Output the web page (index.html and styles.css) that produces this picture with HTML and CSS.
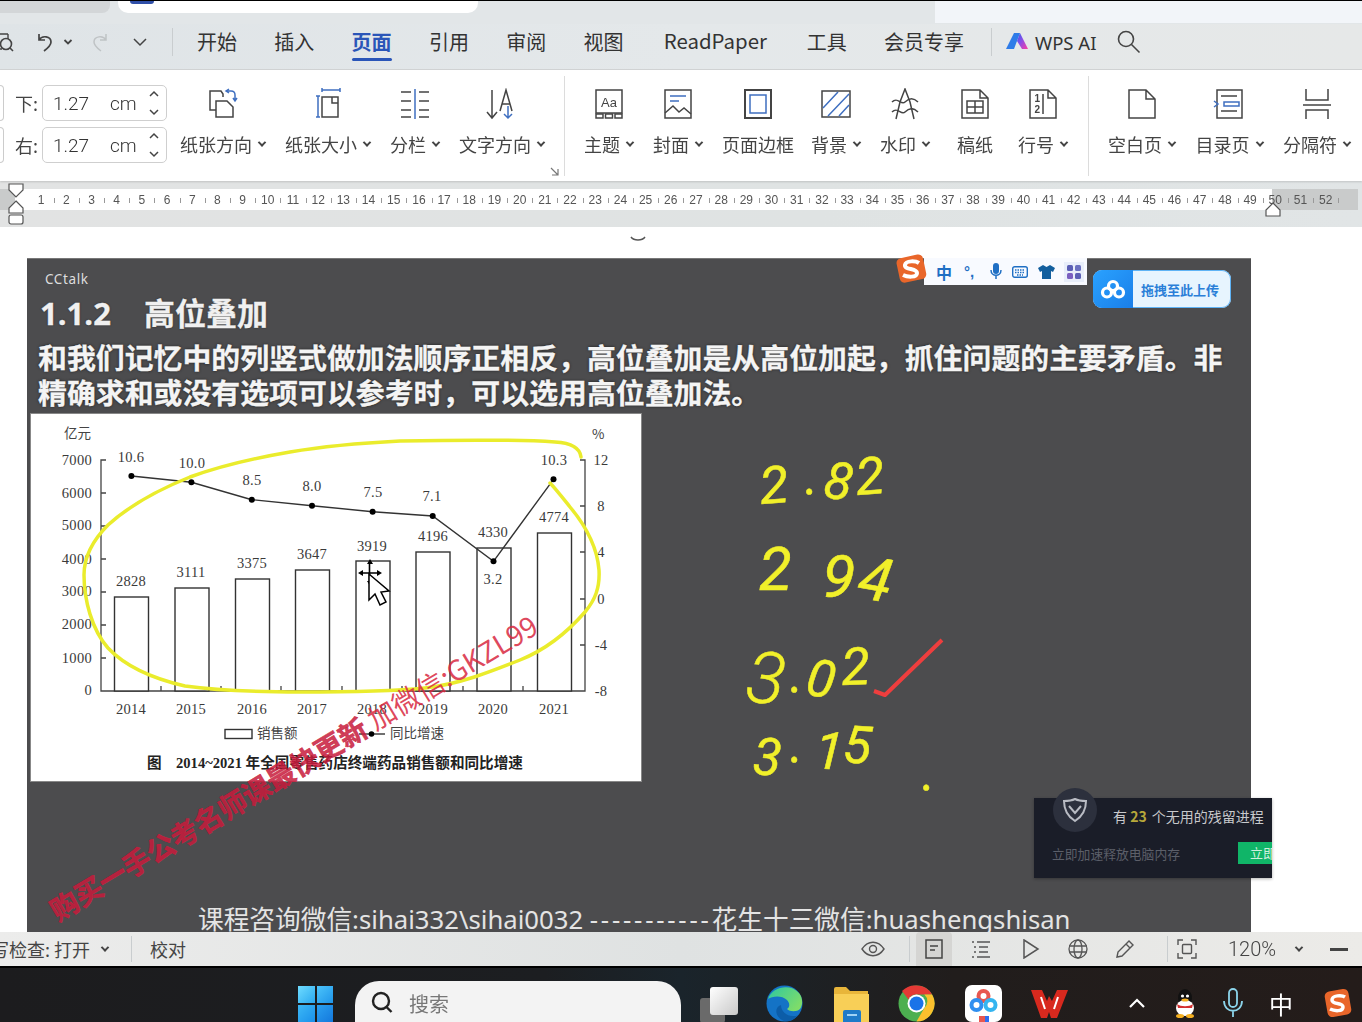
FILE: index.html
```html
<!DOCTYPE html>
<html lang="zh-CN">
<head>
<meta charset="utf-8">
<title>WPS 页面</title>
<link rel="stylesheet" href="styles.css">
</head>
<body>
<div class="screen">

  <div class="tabstrip">
    <div class="tab-prev"></div>
    <div class="tab-active"><span class="tab-blob"></span></div>
    <div class="tab-right"></div>
  </div>

  <nav class="menubar">
    <div class="quick">
      <svg class="q-preview" width="16" height="24" viewBox="0 0 16 24"><path d="M-4 4h12M8 4v5M-4 19h6" fill="none" stroke="#444" stroke-width="1.4"/><circle cx="6" cy="14" r="5.5" fill="none" stroke="#444" stroke-width="1.6"/><path d="M10 18l3 3" stroke="#444" stroke-width="1.6"/></svg>
      <svg class="q-undo" width="18" height="22" viewBox="0 0 18 22"><path d="M3 3v6h6M3 9c3-5 12-4 12 2 0 3-3 6-7 9" fill="none" stroke="#444" stroke-width="1.7"/></svg>
      <svg class="q-caret" width="10" height="8" viewBox="0 0 10 8"><path d="M1.5 2l3.5 3.500L8.500 2" fill="none" stroke="#444" stroke-width="1.800"/></svg>
      <svg class="q-redo" width="18" height="22" viewBox="0 0 18 22"><path d="M15 3v6H9M15 9c-3-5-12-4-12 2 0 3 3 6 7 9" fill="none" stroke="#bfc3c5" stroke-width="1.500"/></svg>
      <svg class="q-more" width="16" height="10" viewBox="0 0 16 10"><path d="M2 2l6 6 6-6" fill="none" stroke="#444" stroke-width="1.500"/></svg>
    </div>
    <span class="vsep"></span>
    <div class="menu-items">
      <span class="menu-item">开始</span>
      <span class="menu-item">插入</span>
      <span class="menu-item is-active">页面</span>
      <span class="menu-item">引用</span>
      <span class="menu-item">审阅</span>
      <span class="menu-item">视图</span>
      <span class="menu-item menu-latin">ReadPaper</span>
      <span class="menu-item">工具</span>
      <span class="menu-item">会员专享</span>
    </div>
    <span class="vsep vsep-ai"></span>
    <svg class="ai-logo" width="24" height="20" viewBox="0 0 24 20"><defs><linearGradient id="aig" x1="0" x2="1" y1="0" y2="1"><stop offset="0" stop-color="#3a5ce8"/><stop offset=".45" stop-color="#8a4ee8"/><stop offset="1" stop-color="#ff3fa0"/></linearGradient></defs><path d="M9 1h6L9 17H1z" fill="#2f7ce8"/><path d="M12 9l3-8 8 16h-6z" fill="url(#aig)"/></svg>
    <span class="ai-text">WPS AI</span>
    <svg class="menu-search" width="26" height="26" viewBox="0 0 26 26"><circle cx="10" cy="10" r="7.500" fill="none" stroke="#444" stroke-width="1.600"/><path d="M15.500 15.500l8 8" stroke="#444" stroke-width="1.600"/></svg>
  </nav>

  <section class="ribbon">
    <div class="margins">
      <div class="margin-row">
        <span class="stub"></span><span class="margin-label">下:</span>
        <div class="spin"><span class="spin-val">1.27</span><span class="spin-unit">cm</span>
          <svg class="spin-arrows" width="12" height="28" viewBox="0 0 12 28"><path d="M2 7l4-4 4 4M2 21l4 4 4-4" fill="none" stroke="#444" stroke-width="1.500"/></svg></div>
      </div>
      <div class="margin-row">
        <span class="stub"></span><span class="margin-label">右:</span>
        <div class="spin"><span class="spin-val">1.27</span><span class="spin-unit">cm</span>
          <svg class="spin-arrows" width="12" height="28" viewBox="0 0 12 28"><path d="M2 7l4-4 4 4M2 21l4 4 4-4" fill="none" stroke="#444" stroke-width="1.500"/></svg></div>
      </div>
    </div>

    <div class="group group-a">
      <div class="tool"><svg class="ico" viewBox="0 0 32 32"><path d="M9 22H3V3h11l2 3v3M9 29V13h11l6 6v10z" class="k"/><path d="M20 3h4c3 0 4 2 4 4v5M26 10l2 3 2-3M22 1l-3 2 3 2" class="b"/></svg><span class="tool-label">纸张方向<i class="dd"></i></span></div>
      <div class="tool"><svg class="ico" viewBox="0 0 32 32"><path d="M10 9h16v20H10zM20 9v6h6" class="k"/><path d="M10 2h18M10 0v4M28 0v4M6 8v21M4 8h4M4 29h4" class="b"/></svg><span class="tool-label">纸张大小<i class="dd"></i></span></div>
      <div class="tool"><svg class="ico" viewBox="0 0 32 32"><path d="M2 4h10M2 13h10M2 22h10M2 29h10M20 4h10M20 13h10M20 22h10M20 29h10" class="k"/><path d="M16 1v30" class="b"/></svg><span class="tool-label">分栏<i class="dd"></i></span></div>
      <div class="tool"><svg class="ico" viewBox="0 0 32 32"><path d="M6 2v28M1 24l5 6 5-6M14 23l6-21 6 21M16 16h8" class="k"/><path d="M22 18v12M18 26l4 4 4-4" class="b"/></svg><span class="tool-label">文字方向<i class="dd"></i></span></div>
    </div>
    <div class="launcher-wrap"><svg class="launcher" width="9" height="9" viewBox="0 0 9 9"><path d="M1 1l6.500 6.500M8 2v6H2" fill="none" stroke="#777" stroke-width="1.200"/></svg></div>
    <span class="rsep"></span>

    <div class="group group-b">
      <div class="tool"><svg class="ico" viewBox="0 0 32 32"><path d="M3 2h26v23H3z" class="k"/><path d="M3 26h7v4H3zM12.500 26h7v4h-7zM22 26h7v4h-7z" class="k"/><text x="16" y="19" class="ico-text">Aa</text></svg><span class="tool-label">主题<i class="dd"></i></span></div>
      <div class="tool"><svg class="ico" viewBox="0 0 32 32"><path d="M3 2h26v28H3z" class="k"/><path d="M8 8h16M8 13h9" class="b"/><path d="M3 25l8-7 6 6 5-4 7 6" class="k"/></svg><span class="tool-label">封面<i class="dd"></i></span></div>
      <div class="tool tool-tight"><svg class="ico" viewBox="0 0 32 32"><path d="M3 2h26v28H3z" class="k k2"/><path d="M8 7h16v18H8z" class="b"/></svg><span class="tool-label">页面边框</span></div>
      <div class="tool"><svg class="ico" viewBox="0 0 32 32"><path d="M2 3h28v26H2z" class="k"/><path d="M3 20L18 4M8 28L29 6M19 28l10-11" class="b"/></svg><span class="tool-label">背景<i class="dd"></i></span></div>
      <div class="tool"><svg class="ico" viewBox="0 0 32 32"><path d="M7 31l4-17 5-13 5 13 4 17" class="k"/><path d="M3 14c6-6 9 4 13 0s8-5 13 0M3 24c6-6 9 4 13 0s8-5 13 0" class="k"/></svg><span class="tool-label">水印<i class="dd"></i></span></div>
      <div class="tool tool-gaoz"><svg class="ico" viewBox="0 0 32 32"><path d="M3 2h18l8 8v20H3zM21 2v8h8" class="k"/><path d="M8 13h16v12H8zM16 13v12M8 19h16" class="k"/></svg><span class="tool-label">稿纸</span></div>
      <div class="tool tool-hang"><svg class="ico" viewBox="0 0 32 32"><path d="M3 2h18l8 8v20H3zM21 2v8h8M16 6v20" class="k"/><text x="7.500" y="14" class="ico-num">1</text><text x="7.500" y="25" class="ico-num">2</text></svg><span class="tool-label">行号<i class="dd"></i></span></div>
    </div>
    <span class="rsep rsep2"></span>
    <div class="group group-c">
      <div class="tool"><svg class="ico" viewBox="0 0 32 32"><path d="M3 2h17l9 9v19H3zM20 2v9h9" class="k"/></svg><span class="tool-label">空白页<i class="dd"></i></span></div>
      <div class="tool"><svg class="ico" viewBox="0 0 32 32"><path d="M4 2h25v28H4zM8 8h16M8 23h16" class="k"/><path d="M11 14h15v4H11zM1 13l4 3-4 3" class="b"/></svg><span class="tool-label">目录页<i class="dd"></i></span></div>
      <div class="tool"><svg class="ico" viewBox="0 0 32 32"><path d="M5 1v11h22V1M2 17h28M5 31V22h22v9" class="k"/></svg><span class="tool-label">分隔符<i class="dd"></i></span></div>
    </div>
  </section>

  <div class="rulerband">
    <div class="ruler">
      <span>1</span><span>2</span><span>3</span><span>4</span><span>5</span><span>6</span><span>7</span><span>8</span><span>9</span><span>10</span><span>11</span><span>12</span><span>13</span>
      <span>14</span><span>15</span><span>16</span><span>17</span><span>18</span><span>19</span><span>20</span><span>21</span><span>22</span><span>23</span><span>24</span><span>25</span><span>26</span>
      <span>27</span><span>28</span><span>29</span><span>30</span><span>31</span><span>32</span><span>33</span><span>34</span><span>35</span><span>36</span><span>37</span><span>38</span><span>39</span>
      <span>40</span><span>41</span><span>42</span><span>43</span><span>44</span><span>45</span><span>46</span><span>47</span><span>48</span><span>49</span><span>50</span><span>51</span><span>52</span>
    </div>
    <svg class="indent-left" width="18" height="44" viewBox="0 0 18 44"><path d="M2 2h14v6l-7 7-7-7z" fill="#fff" stroke="#555" stroke-width="1.200"/><path d="M9 19l7 7v5H2v-5z" fill="#fff" stroke="#555" stroke-width="1.200"/><rect x="2" y="33" width="14" height="9" rx="2" fill="#fff" stroke="#555" stroke-width="1.200"/></svg>
    <svg class="indent-right" width="18" height="18" viewBox="0 0 18 18"><path d="M9 2l7 7v6H2V9z" fill="#fff" stroke="#555" stroke-width="1.200"/></svg>
  </div>

  <main class="doc">
    <svg class="spinner" width="16" height="6" viewBox="0 0 16 6"><path d="M1 1c3 4 11 4 14 0" fill="none" stroke="#555" stroke-width="1.500"/></svg>
    <div class="slide">
      <div class="brand">CCtalk</div>
      <h1 class="slide-title"><span class="slide-no">1.1.2</span>高位叠加</h1>
      <p class="slide-body">和我们记忆中的列竖式做加法顺序正相反，高位叠加是从高位加起，抓住问题的主要矛盾。非<br>精确求和或没有选项可以参考时，可以选用高位叠加法。</p>

      <div class="chart-card">
        <svg class="chart" viewBox="31 414 610 366" width="610" height="366">
          <g class="axis">
            <path d="M106 460h-5v231h484V460h-5"/>
            <path d="M101 493h5M101 526h5M101 559h5M101 592h5M101 625h5M101 658h5M585 506h-5M585 552h-5M585 599h-5M585 645h-5"/>
            <path d="M161 691v-5M221 691v-5M281 691v-5M342 691v-5M402 691v-5M463 691v-5M523 691v-5"/>
          </g>
          <g class="bars">
            <rect x="114.500" y="597" width="34" height="94"/>
            <rect x="175" y="588" width="34" height="103"/>
            <rect x="235.500" y="579" width="34" height="112"/>
            <rect x="295.500" y="570" width="34" height="121"/>
            <rect x="356" y="561" width="34" height="130"/>
            <rect x="416" y="552" width="34" height="139"/>
            <rect x="477" y="548" width="34" height="143"/>
            <rect x="537.500" y="533" width="34" height="158"/>
          </g>
          <path class="trend" d="M131.400 476L191.400 482.300 251.800 499.700 312 505.700 372.600 511.700 432.700 516 493.500 561.300 553.500 479.300"/>
          <g class="dots">
            <circle cx="131.400" cy="476" r="3"/><circle cx="191.400" cy="482.300" r="3"/><circle cx="251.800" cy="499.700" r="3"/><circle cx="312" cy="505.700" r="3"/><circle cx="372.600" cy="511.700" r="3"/><circle cx="432.700" cy="516" r="3"/><circle cx="493.500" cy="561.300" r="3"/><circle cx="553.500" cy="479.300" r="3"/>
          </g>
          <g class="ct ct-end">
            <text x="92" y="465">7000</text><text x="92" y="498">6000</text><text x="92" y="530">5000</text><text x="92" y="564">4000</text><text x="92" y="596">3000</text><text x="92" y="629">2000</text><text x="92" y="663">1000</text><text x="92" y="695">0</text>
          </g>
          <g class="ct ct-mid">
            <text x="601" y="465">12</text><text x="601" y="511">8</text><text x="601" y="557">4</text><text x="601" y="604">0</text><text x="601" y="650">-4</text><text x="601" y="696">-8</text>
            <text x="131" y="462">10.6</text><text x="192" y="468">10.0</text><text x="252" y="485">8.5</text><text x="312" y="491">8.0</text><text x="373" y="497">7.5</text><text x="432" y="501">7.1</text><text x="493" y="584">3.2</text><text x="554" y="465">10.3</text>
            <text x="131" y="586">2828</text><text x="191" y="577">3111</text><text x="252" y="568">3375</text><text x="312" y="559">3647</text><text x="372" y="551">3919</text><text x="433" y="541">4196</text><text x="493" y="537">4330</text><text x="554" y="522">4774</text>
            <text x="131" y="714">2014</text><text x="191" y="714">2015</text><text x="252" y="714">2016</text><text x="312" y="714">2017</text><text x="372" y="714">2018</text><text x="433" y="714">2019</text><text x="493" y="714">2020</text><text x="554" y="714">2021</text>
          </g>
          <text class="cj" x="64" y="438">亿元</text>
          <text class="cj" x="592" y="439">%</text>
          <rect class="legend-box" x="225" y="729.500" width="27" height="9"/>
          <text class="cj" x="257" y="738">销售额</text>
          <path class="trend" d="M359 734h26"/><circle cx="371.500" cy="734" r="2.800"/>
          <text class="cj" x="390" y="738">同比增速</text>
          <text class="caption" x="147" y="768">图<tspan x="176">2014~2021 年全国零售药店终端药品销售额和同比增速</tspan></text>
        </svg>
      </div>

      <p class="slide-foot">课程咨询微信:sihai332\sihai0032 <span class="foot-dash">-----------</span>花生十三微信:huashengshisan</p>

      <svg class="ink" viewBox="27 258 1224 674" width="1224" height="674">
        <path class="ink-y" d="M581 457C580 448 572 443 555 442C510 439 450 440 400 441C360 443 325 446 290 452C255 458 220 466 190 477C160 489 130 505 108 525C92 541 84 558 84 575C84 600 92 630 108 648C125 666 150 678 185 686C220 691 260 692 300 692C340 692 385 692 425 688C460 684 490 672 520 660C545 650 565 635 585 612C595 600 600 588 599 570C597 545 585 525 570 507C562 497 555 488 550 483"/>
        <g class="ink-text">
          <text x="761 805 822 857" y="504 494 497 495" rotate="-4 0 8 -4">2.82</text>
          <text class="ink-big" x="759 818 820 856" y="590 570 596 597" rotate="0 0 6 10">2 94</text>
          <text x="744 790 804 842" y="701 692 694 685" rotate="6 0 10 -2"><tspan class="ink-tall">3</tspan>.02</text>
          <text x="752 790 814 842" y="774 762 768 762" rotate="4 0 4 4">3.15</text>
          <text x="922" y="790">.</text>
        </g>
        <path class="ink-r" d="M874 691l11 4 57-55"/>
        <text class="wm" transform="translate(58 922) rotate(-31)"><tspan class="wm-bold">购买一手公考名师课最快更新</tspan> <tspan class="wm-light">加微信:GKZL99</tspan></text>
        <g class="cursor">
          <path d="M369.500 573v-10m0 20v-10m-9 0h18" stroke="#000" stroke-width="1.600" fill="none"/>
          <path d="M370 559l-3 5h6zM370 586l-3-5h6zM358 573l5-3v6zM382 573l-5-3v6z" fill="#000"/>
          <path d="M369 574v26l6-6 5 11 6-3-5-10 8-1z" fill="#fff" stroke="#000" stroke-width="1.500"/>
        </g>
      </svg>

      <div class="ime">
        <svg class="ime-logo" width="34" height="34" viewBox="0 0 34 34"><rect x="3" y="4" width="27" height="25" rx="5" transform="rotate(-12 17 17)" fill="#e9662a"/><path d="M24 11c-3-2-13-3-14 2s12 3 12 8-10 4-14 2" fill="none" stroke="#fff" stroke-width="4"/></svg>
        <span class="ime-zh">中</span>
        <span class="ime-punct">°,</span>
        <svg width="12" height="17" viewBox="0 0 12 17"><rect x="3" y="0" width="6" height="11" rx="3" fill="#1f6fc4"/><path d="M1 7c0 7 10 7 10 0M6 12v4" fill="none" stroke="#1f6fc4" stroke-width="1.500"/></svg>
        <svg width="16" height="12" viewBox="0 0 16 12"><rect x=".7" y=".7" width="14.600" height="10.600" rx="2" fill="none" stroke="#1f6fc4" stroke-width="1.400"/><path d="M3 4h10M3 6.500h10M5 9h6" stroke="#1f6fc4" stroke-width="1.300" stroke-dasharray="1.500 1"/></svg>
        <svg width="17" height="14" viewBox="0 0 17 14"><path d="M5 0l3.500 2L12 0l5 3-2 4-2-1v8H4V6L2 7 0 3z" fill="#135f9e"/></svg>
        <svg class="ime-apps" width="20" height="20" viewBox="0 0 20 20"><rect width="20" height="20" fill="#e8eefa"/><rect x="3" y="3" width="6" height="6" rx="1.500" fill="#5b5fb5"/><rect x="11" y="3" width="6" height="6" rx="1.500" fill="#6a70c0"/><rect x="3" y="11" width="6" height="6" rx="1.500" fill="#7a5fc0"/><rect x="11" y="11" width="6" height="6" rx="1.500" fill="#5b5fb5"/></svg>
      </div>

      <div class="upload">
        <span class="upload-ico"><svg width="26" height="20" viewBox="0 0 26 20"><g fill="none" stroke="#fff" stroke-width="3.200"><circle cx="13" cy="7" r="4.500"/><circle cx="7" cy="13.500" r="4.500"/><circle cx="19" cy="13.500" r="4.500"/></g></svg></span>
        <span class="upload-text">拖拽至此上传</span>
      </div>

      <div class="toast">
        <span class="toast-badge"><svg width="28" height="28" viewBox="0 0 28 28"><path d="M14 3c4 2 7 2 11 2 0 9-3 15-11 20C6 20 3 14 3 5c4 0 7 0 11-2z" fill="none" stroke="#b9bcc4" stroke-width="2"/><path d="M8 10l6 7 6-7" fill="none" stroke="#b9bcc4" stroke-width="2"/></svg></span>
        <div class="toast-top">有 <b>23</b> 个无用的残留进程</div>
        <div class="toast-bottom"><span class="toast-sub">立即加速释放电脑内存</span><span class="toast-btn">立即清理</span></div>
      </div>
    </div>
  </main>

  <footer class="status">
    <span class="status-clip">写检查: 打开</span>
    <i class="dd status-dd"></i>
    <span class="vsep status-sep"></span>
    <span class="status-text">校对</span>
    <div class="status-right">
      <svg width="24" height="16" viewBox="0 0 24 16"><path d="M1 8c6-9 16-9 22 0-6 9-16 9-22 0z" fill="none" stroke="#555" stroke-width="1.400"/><circle cx="12" cy="8" r="3.500" fill="none" stroke="#555" stroke-width="1.400"/></svg>
      <span class="vsep sr-sep1"></span>
      <span class="view-active"><svg width="18" height="20" viewBox="0 0 18 20"><path d="M1 1h16v18H1z" fill="none" stroke="#444" stroke-width="1.500"/><path d="M5 7h8M5 11h5" stroke="#444" stroke-width="1.500"/></svg></span>
      <svg class="sr-list" width="20" height="18" viewBox="0 0 20 18"><path d="M6 2h13M8 7h9M8 12h9M6 17h13M1 2h2M3 7h2M3 12h2M1 17h2" stroke="#555" stroke-width="1.400"/></svg>
      <svg class="sr-play" width="18" height="20" viewBox="0 0 18 20"><path d="M2 1l14 9-14 9z" fill="none" stroke="#555" stroke-width="1.500"/></svg>
      <svg class="sr-globe" width="20" height="20" viewBox="0 0 20 20"><g fill="none" stroke="#555" stroke-width="1.300"><circle cx="10" cy="10" r="9"/><ellipse cx="10" cy="10" rx="4" ry="9"/><path d="M1 7h18M1 13h18"/></g></svg>
      <svg class="sr-pen" width="20" height="20" viewBox="0 0 20 20"><path d="M2 18l1-5L14 2l4 4L7 17zM11 5l4 4" fill="none" stroke="#555" stroke-width="1.400"/></svg>
      <span class="vsep sr-sep2"></span>
      <svg class="sr-full" width="20" height="20" viewBox="0 0 20 20"><path d="M1 6V1h5M14 1h5v5M19 14v5h-5M6 19H1v-5" fill="none" stroke="#555" stroke-width="1.400"/><rect x="5.500" y="5.500" width="9" height="9" rx="1" fill="none" stroke="#555" stroke-width="1.400"/></svg>
      <span class="zoom-val">120%</span>
      <i class="dd zoom-dd"></i>
      <span class="zoom-minus"></span>
    </div>
  </footer>

  <div class="taskbar">
    <span class="win"><i></i><i></i><i></i><i></i></span>
    <div class="search">
      <svg width="26" height="26" viewBox="0 0 26 26"><circle cx="11" cy="11" r="8" fill="none" stroke="#222" stroke-width="2.400"/><path d="M16.500 17l5 5" stroke="#222" stroke-width="2.400"/></svg>
      <span>搜索</span>
    </div>
    <span class="taskview"><i class="tv-back"></i><i class="tv-front"></i></span>
    <svg class="t-edge" width="37" height="37" viewBox="0 0 37 37"><defs><linearGradient id="eg" x1="0" x2="1" y1="0" y2=".6"><stop offset="0" stop-color="#2ec8a0"/><stop offset="1" stop-color="#7edc6a"/></linearGradient></defs><circle cx="18.500" cy="18.500" r="18" fill="#1473c6"/><path d="M2 14C6 2 24-2 33 8c4 5 4 12 1 16-3 3-10 3-13 0 3-2 3-6 0-9-5-5-15-4-19-1z" fill="url(#eg)"/><path d="M15 20c0 6 5 11 12 11 2 0 4 0 5-1-3 5-9 7-14 6-8-3-11-13-3-16z" fill="#0c5da8"/></svg>
    <svg class="t-folder" width="37" height="37" viewBox="0 0 37 37"><path d="M1 4a2 2 0 0 1 2-2h10l4 4h18a2 2 0 0 1 0 0v31H1z" fill="#e8b53a"/><path d="M1 9h35v28H1z" fill="#f8cf57"/><path d="M12 25h14a2 2 0 0 1 2 2v10H10V27a2 2 0 0 1 2-2z" fill="#1e7ac8"/><path d="M14 30h10" stroke="#9fd2f5" stroke-width="2"/></svg>
    <svg class="t-chrome" width="37" height="37" viewBox="0 0 37 37"><circle cx="18.500" cy="18.500" r="18" fill="#4caf50"/><path d="M18.500.5a18 18 0 0 1 15.600 9H18.500a9 9 0 0 0-8 5L4 6A18 18 0 0 1 18.500.5z" fill="#e53935"/><path d="M34.100 9.500A18 18 0 0 1 18.500 36.500l7.800-13.500a9 9 0 0 0 0-13.500z" fill="#fbc02d"/><circle cx="18.500" cy="18.500" r="9" fill="#fff"/><circle cx="18.500" cy="18.500" r="7" fill="#1a73e8"/></svg>
    <svg class="t-baidu" width="37" height="37" viewBox="0 0 37 37"><rect width="37" height="37" y="0" rx="7" fill="#fff"/><g fill="none" stroke-width="4"><circle cx="18.500" cy="11" r="5" stroke="#e8574f"/><circle cx="11.500" cy="20" r="5" stroke="#2f8ff0"/><circle cx="25.500" cy="20" r="5" stroke="#35b5f0"/></g><rect x="14" y="31" width="6" height="6" fill="#e8574f"/><rect x="20" y="31" width="4" height="6" fill="#2f6ff0"/></svg>
    <svg class="t-wps" width="37" height="30" viewBox="0 0 37 30"><path d="M0 1h11l5 11 2-5 3 5 5-11h11L26 29h-6l-2-6-2 6h-6z" fill="#d8291e"/><path d="M10 8l4 12M27 8l-4 12" stroke="#fff" stroke-width="2" fill="none"/></svg>
    <svg class="t-caret" width="18" height="12" viewBox="0 0 18 12"><path d="M2 10l7-7 7 7" fill="none" stroke="#fff" stroke-width="2.200"/></svg>
    <svg class="t-qq" width="22" height="30" viewBox="0 0 22 30"><ellipse cx="11" cy="10" rx="7" ry="9" fill="#111"/><ellipse cx="11" cy="20" rx="9" ry="8" fill="#fff"/><path d="M3 16c4 3 12 3 16 0l-1 4H4z" fill="#d32f2f"/><circle cx="8.500" cy="8" r="1.600" fill="#fff"/><circle cx="13.500" cy="8" r="1.600" fill="#fff"/><ellipse cx="11" cy="12" rx="3.500" ry="1.500" fill="#f5b021"/><ellipse cx="6" cy="28" rx="4" ry="2" fill="#f5b021"/><ellipse cx="16" cy="28" rx="4" ry="2" fill="#f5b021"/></svg>
    <svg class="t-mic" width="20" height="30" viewBox="0 0 20 30"><rect x="6" y="1" width="8" height="18" rx="4" fill="none" stroke="#8cd4ea" stroke-width="1.800"/><path d="M1 13c0 13 18 13 18 0M10 23v6" fill="none" stroke="#8cd4ea" stroke-width="1.800"/></svg>
    <span class="t-zh">中</span>
    <svg class="t-s" width="28" height="30" viewBox="0 0 28 30"><rect x="2" y="2" width="24" height="26" rx="5" transform="rotate(-10 14 15)" fill="#e9662a"/><path d="M21 9c-3-2-13-2-13 3s11 2 11 7-9 4-13 2" fill="none" stroke="#fff" stroke-width="3.500"/></svg>
  </div>
</div>
</body>
</html>
```
FILE: styles.css
```css
* { box-sizing: border-box; }
html, body { margin: 0; padding: 0; background: #fff; }
body { width: 1362px; height: 1022px; overflow: hidden; font-family: "Noto Sans CJK SC", "Noto Sans", sans-serif; color: #333; }
svg { display: block; flex: none; }
i { font-style: normal; display: block; }

.screen { width: 1362px; height: 1022px; display: flex; flex-direction: column; overflow: hidden; filter: blur(.3px); }

/* tab strip */
.tabstrip { height: 24px; flex: none; display: flex; align-items: flex-start; border-top: 1px solid #000; background: #e2e6e8; }
.tab-prev { width: 110px; height: 12px; background: #d3d6d8; border-radius: 0 0 8px 0; }
.tab-active { width: 360px; height: 12px; margin-left: 8px; background: #fff; border-radius: 0 0 10px 10px; padding-left: 12px; }
.tab-blob { display: block; width: 24px; height: 3px; background: #2f4fa8; border-radius: 0 0 3px 3px; }
.tab-right { width: 427px; height: 22px; margin-left: auto; background: #f2f5f9; }

/* menu */
.menubar { height: 46px; flex: none; display: flex; align-items: center; background: linear-gradient(90deg, #dfe4e7, #e4e8ea 50%, #e6e8e8); box-shadow: inset 0 -1px 0 #d2d4d5; padding-bottom: 10px; }
.quick { width: 172px; display: flex; align-items: center; flex: none; }
.q-undo { margin-left: 20px; }
.q-caret { margin-left: 9px; }
.q-redo { margin-left: 18px; }
.q-more { margin-left: 23px; }
.vsep { width: 1px; height: 28px; background: #c9cdcf; flex: none; display: block; }
.menu-items { display: flex; gap: 37.300px; margin-left: 24px; font-size: 20px; line-height: 28px; }
.menu-item { position: relative; color: #333; white-space: nowrap; }
.menu-latin { margin: -2px 2.500px 0 3px; font-size: 20.400px; }
.menu-item.is-active { color: #2a55b8; font-weight: 700; }
.menu-item.is-active::after { content: ""; position: absolute; left: 0; right: 0; bottom: -5px; height: 3px; background: #2a55b8; border-radius: 2px; }
.vsep-ai { margin-left: 27px; }
.ai-logo { margin-left: 13px; }
.ai-text { margin-left: 6px; font-size: 18.500px; color: #333; font-family: "Noto Sans", sans-serif; white-space: nowrap; }
.menu-search { margin-left: 20px; }

/* ribbon */
.ribbon { height: 111px; flex: none; display: flex; background: #fff; box-shadow: 0 1px 2px rgba(0,0,0,.15); position: relative; z-index: 1; }
.margins { width: 167px; flex: none; padding-top: 15px; display: flex; flex-direction: column; gap: 6px; }
.margin-row { display: flex; align-items: center; height: 36px; }
.stub { width: 4px; height: 36px; border: 1px solid #ccc; border-left: 0; border-radius: 0 4px 4px 0; }
.margin-label { margin-left: 11px; width: 27px; font-size: 18px; color: #444; }
.spin { width: 125px; height: 36px; border: 1px solid #cfcfcf; border-radius: 5px; display: flex; align-items: center; padding-left: 10px; font-family: "Roboto", sans-serif; font-weight: 300; font-size: 19px; color: #333; }
.spin-val { width: 57px; }
.spin-unit { width: 38px; }

.group { display: flex; gap: 20px; margin-left: 13px; }
.tool { display: flex; flex-direction: column; align-items: center; padding-top: 18px; }
.ico { width: 32px; height: 32px; }
.k { fill: none; stroke: #444; stroke-width: 1.500; }
.k2 { stroke-width: 2; }
.b { fill: none; stroke: #3f6fc0; stroke-width: 1.500; }
.ico-text { font: 13px "Liberation Sans", sans-serif; text-anchor: middle; fill: #444; }
.ico-num { font: bold 10px "Liberation Sans", sans-serif; fill: #444; }
.tool-label { margin-top: 10px; display: flex; align-items: center; font-size: 18px; line-height: 28px; color: #444; white-space: nowrap; }
.dd { width: 6px; height: 6px; margin-left: 7px; border-right: 2px solid #444; border-bottom: 2px solid #444; transform: rotate(45deg) translate(-1px,-1px); flex: none; }
.launcher-wrap { width: 20px; flex: none; position: relative; }
.launcher { position: absolute; right: 5px; bottom: 5px; }
.rsep { width: 1px; height: 100px; margin-top: 6px; background: #dcdcdc; flex: none; display: block; }
.group-b { margin-left: 19px; }
.tool-tight { margin-right: -3px; }
.tool-gaoz { margin-left: 8px; }
.tool-hang { margin-left: 5px; }
.rsep2 { margin-left: 21px; }
.group-c { margin-left: 19px; gap: 20.500px; }

/* ruler */
.rulerband { height: 46px; flex: none; padding-top: 8px; background: linear-gradient(90deg, #e2e3e3, #dfe3e3 60%, #e1e5e6); position: relative; }
.ruler { height: 21px; width: 1358px; padding-left: 28.500px; display: flex; align-items: center; font-family: "Liberation Sans", sans-serif; font-size: 12px; color: #555; background: linear-gradient(90deg, #c9cbcb 15px, #fff 15px, #fff 1272px, #c9cbcb 1272px); }
.ruler span { width: 25.200px; flex: none; text-align: center; position: relative; }
.ruler span::after { content: ""; position: absolute; right: -1px; top: 5px; width: 1px; height: 5px; background: #999; }
.indent-left { position: absolute; left: 7px; top: 1px; }
.indent-right { position: absolute; left: 1264px; top: 20px; }

/* document */
.doc { height: 705px; flex: none; background: #fff; position: relative; overflow: hidden; padding: 31px 0 0 27px; }
.spinner { position: absolute; left: 630px; top: 9px; }
.slide { width: 1224px; height: 674px; background: #4c4c4e; position: relative; border-top: 1px solid #777; padding: 12px 0 0 11px; }
.brand { font-family: "Noto Sans", sans-serif; font-size: 13.500px; letter-spacing: .6px; line-height: 16px; color: #ddd; margin-left: 7px; }
.slide-title { margin: 6px 0 0 2px; font-size: 31px; line-height: 38px; font-weight: 700; color: #f0f0f0; text-shadow: 0 0 2px #222; -webkit-text-stroke: .3px #f0f0f0; white-space: nowrap; }
.slide-no { font-family: "Open Sans", sans-serif; display: inline-block; width: 104px; }
.slide-body { margin: 7px 0 0; font-size: 28.900px; line-height: 35px; font-weight: 700; color: #f4f4f4; text-shadow: 0 0 3px #1a1a1a; -webkit-text-stroke: .3px #f4f4f4; white-space: nowrap; }
.chart-card { position: absolute; left: 4px; top: 155px; width: 610px; height: 367px; background: #fff; box-shadow: 0 0 0 1px #888; }
.axis path { fill: none; stroke: #444; stroke-width: 1.300; }
.bars rect { fill: #fff; stroke: #333; stroke-width: 1.400; }
.trend { fill: none; stroke: #333; stroke-width: 1.400; }
.ct text { font-family: "Liberation Serif", serif; font-size: 14.500px; fill: #3a3a3a; letter-spacing: .3px; }
.ct-end text { text-anchor: end; }
.ct-mid text { text-anchor: middle; }
.cj { font-size: 13.500px; fill: #444; }
.legend-box { fill: #fff; stroke: #333; stroke-width: 1.400; }
.caption { font-family: "Liberation Serif", "Noto Sans CJK SC", serif; font-weight: 700; font-size: 14.600px; fill: #222; }
.slide-foot { position: absolute; left: 171px; top: 642px; margin: 0; font-family: "Noto Sans", "Noto Sans CJK SC", sans-serif; font-size: 25.700px; line-height: 38px; color: #e4e4e4; white-space: nowrap; }
.foot-dash { letter-spacing: 2.800px; }

.ink { position: absolute; left: 0; top: -1px; pointer-events: none; }
.ink-y { fill: none; stroke: #eaec2c; stroke-width: 3.500; stroke-linecap: round; }
.ink-text text { font-family: "Roboto", "Liberation Sans", sans-serif; font-size: 52px; fill: #f1f02a; stroke: #f1f02a; stroke-width: .5px; font-style: italic; }
.ink-text .ink-big { font-size: 60px; }
.ink-tall { font-size: 72px; font-weight: 300; }
.ink-r { fill: none; stroke: #ee3e3e; stroke-width: 4; stroke-linejoin: round; }
.wm { font-size: 28px; fill: #c81b3c; fill-opacity: .85; }
.wm-bold { font-weight: 700; stroke: #c81b3c; stroke-width: .5px; }
.wm-light { font-weight: 400; fill: #d8283f; }

.ime { position: absolute; left: 897px; top: -1px; width: 163px; height: 27px; background: #f8faff; display: flex; align-items: center; gap: 10px; padding-left: 12px; }
.ime-logo { position: absolute; left: -29px; top: -6px; }
.ime-zh { font-size: 16px; font-weight: 700; color: #1f6fc4; margin-right: 2px; }
.ime-punct { font-size: 15px; font-weight: 700; color: #1f6fc4; width: 16px; font-family: "Liberation Sans", sans-serif; }
.ime-apps { margin-left: -1px; }
.upload { position: absolute; left: 1066px; top: 11px; width: 138px; height: 38px; border-radius: 9px; background: #e7f4fe; display: flex; align-items: center; overflow: hidden; box-shadow: 0 0 0 1px #5fb3f5 inset; }
.upload-ico { width: 40px; height: 38px; background: linear-gradient(135deg, #2aa2ff, #1a7ee8); display: flex; align-items: center; justify-content: center; }
.upload-text { margin-left: 8px; font-size: 13px; font-weight: 700; color: #2b7fd8; white-space: nowrap; }
.toast { position: absolute; left: 1007px; top: 539px; width: 238px; height: 80px; background: #1a1d28; box-shadow: 0 1px 3px rgba(0,0,0,.3); }
.toast-badge { position: absolute; left: 19px; top: -10px; width: 44px; height: 44px; border-radius: 50%; background: #2c303d; display: flex; align-items: center; justify-content: center; }
.toast-top { position: absolute; left: 79px; top: 8px; font-size: 14px; line-height: 20px; color: #c8c9cc; white-space: nowrap; }
.toast-top b { color: #b7a83a; font-weight: 700; margin-right: 2px; }
.toast-bottom { position: absolute; left: 18px; right: 0; top: 44px; display: flex; align-items: center; justify-content: space-between; overflow: hidden; height: 22px; }
.toast-sub { font-size: 12.800px; color: #5c5f69; white-space: nowrap; }
.toast-btn { width: 34px; height: 22px; overflow: hidden; background: #10b568; color: #cfeede; font-size: 13px; line-height: 22px; padding-left: 12px; white-space: nowrap; flex: none; }

/* status */
.status { height: 36px; flex: none; display: flex; align-items: center; background: linear-gradient(90deg, #ececeb, #dfe2e2 50%, #ecebe8); border-bottom: 2px solid #000; font-size: 18px; color: #444; position: relative; z-index: 1; }
.status-clip { margin-left: -9px; white-space: nowrap; }
.status-dd { margin-left: 12px; }
.status-sep { height: 26px; margin-left: 23px; }
.status-text { margin-left: 18px; }
.status-right { margin-left: auto; height: 34px; display: flex; align-items: center; width: 501px; }
.sr-sep1 { height: 26px; margin-left: 24px; }
.view-active { width: 36px; height: 34px; margin-left: 6px; background: #d5d5d3; border-radius: 4px 4px 0 0; display: flex; align-items: center; justify-content: center; }
.sr-list { margin-left: 19px; }
.sr-play { margin-left: 31px; }
.sr-globe { margin-left: 28px; }
.sr-pen { margin-left: 27px; }
.sr-sep2 { height: 26px; margin-left: 32px; }
.sr-full { margin-left: 9px; }
.zoom-val { margin-left: 31px; font-family: "Roboto", sans-serif; font-weight: 300; font-size: 20px; }
.zoom-dd { margin-left: 20px; }
.zoom-minus { width: 18px; height: 3px; background: #444; margin-left: 28px; flex: none; }

/* taskbar */
.taskbar { height: 54px; flex: none; display: flex; align-items: flex-end; background: linear-gradient(90deg, #1c1c1e, #1c1e21 40%, #1a242b 50%, #211d1c 70%, #241c1a); padding-left: 298px; overflow: hidden; }
.win { width: 35px; height: 36px; display: grid; grid-template-columns: 1fr 1fr; gap: 2px; flex: none; }
.win i:nth-child(1) { background: linear-gradient(135deg, #6fdcff, #2aa8f0); }
.win i:nth-child(2) { background: linear-gradient(135deg, #4cc4fa, #1f95ea); }
.win i:nth-child(3) { background: linear-gradient(135deg, #3cb8f6, #1a90ea); }
.win i:nth-child(4) { background: linear-gradient(135deg, #2aa0f0, #1478dc); }
.search { width: 326px; height: 41px; margin-left: 22px; border-radius: 24px 24px 0 0; background: #f3f3f3; display: flex; align-items: center; padding: 3px 0 0 15px; font-size: 20px; color: #777; }
.search span { margin-left: 13px; }
.taskview { width: 38px; height: 36px; margin-left: 19px; position: relative; flex: none; margin-bottom: -1px; }
.tv-back { position: absolute; left: 0; top: 11px; width: 25px; height: 25px; background: #6a6a6a; border-radius: 3px; }
.tv-front { position: absolute; left: 10px; top: 0; width: 28px; height: 28px; background: linear-gradient(135deg,#fff,#c9c9c9); border-radius: 3px; }
.t-edge { margin-left: 28px; }
.t-folder { margin-left: 30px; }
.t-chrome { margin-left: 28px; }
.t-baidu { margin-left: 30px; }
.t-wps { margin-left: 29px; margin-bottom: 3px; }
.t-caret { margin-left: 60px; margin-bottom: 13px; }
.t-qq { margin-left: 28px; margin-bottom: 4px; }
.t-mic { margin-left: 27px; margin-bottom: 4px; }
.t-zh { margin-left: 26px; margin-bottom: 3px; font-size: 24px; line-height: 30px; color: #fff; }
.t-s { margin-left: 31px; margin-bottom: 4px; }
```
